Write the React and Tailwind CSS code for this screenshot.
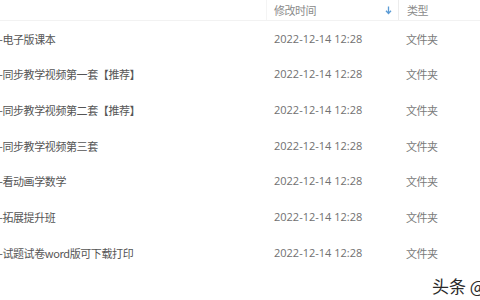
// App.jsx
const rows = [
    "-电子版课本",
    "-同步教学视频第一套【推荐】",
    "-同步教学视频第二套【推荐】",
    "-同步教学视频第三套",
    "-看动画学数学",
    "-拓展提升班",
    "-试题试卷word版可下载打印",
];

const cjk = { fontFamily: '"Microsoft YaHei", "Noto Sans CJK SC", sans-serif' };

export default function App() {
    return (
        <div
            className="relative w-[480px] h-[300px] overflow-hidden bg-white text-[#444]"
            style={cjk}
        >
            {/* 表头 */}
            <div className="flex h-[21px] border-b border-[#f2f2f2] text-[11px] text-[#8a8a8a]">
                <div className="w-[267px] border-r border-[#f4f4f4]" />
                <div className="w-[132px] flex items-center justify-between pl-[7px] pr-[6px] border-r border-[#ececec]">
                    <span className="tracking-[-0.5px]">修改时间</span>
                    <svg width="7" height="9" viewBox="0 0 7 9" className="mt-[1px]">
                        <path d="M3.5 0.5v6.5M1 4.8l2.5 2.7 2.5-2.7" stroke="#5b9bd5" strokeWidth="1.3" fill="none" />
                    </svg>
                </div>
                <div className="flex items-center pl-[8px] tracking-[-0.5px]">类型</div>
            </div>

            {/* 文件列表 */}
            {rows.map((name) => (
                <div key={name} className="flex items-center h-[35.67px] text-[11px]">
                    <div className="w-[267px] ml-[-1px] tracking-[-0.4px] text-[#555]">{name}</div>
                    <div
                        className="w-[132px] pl-[8px] text-[11px] text-[#707070]"
                        style={{ fontFamily: '"Open Sans", "Noto Sans", sans-serif' }}
                    >
                        2022-12-14 12:28
                    </div>
                    <div className="pl-[8px] tracking-[-0.5px] text-[#7a7a7a]">文件夹</div>
                </div>
            ))}

            {/* 水印 */}
            <div className="absolute left-[432px] top-[273px] text-[17px] text-[#2a2a2a] whitespace-nowrap">
                头条 @
            </div>
        </div>
    );
}
